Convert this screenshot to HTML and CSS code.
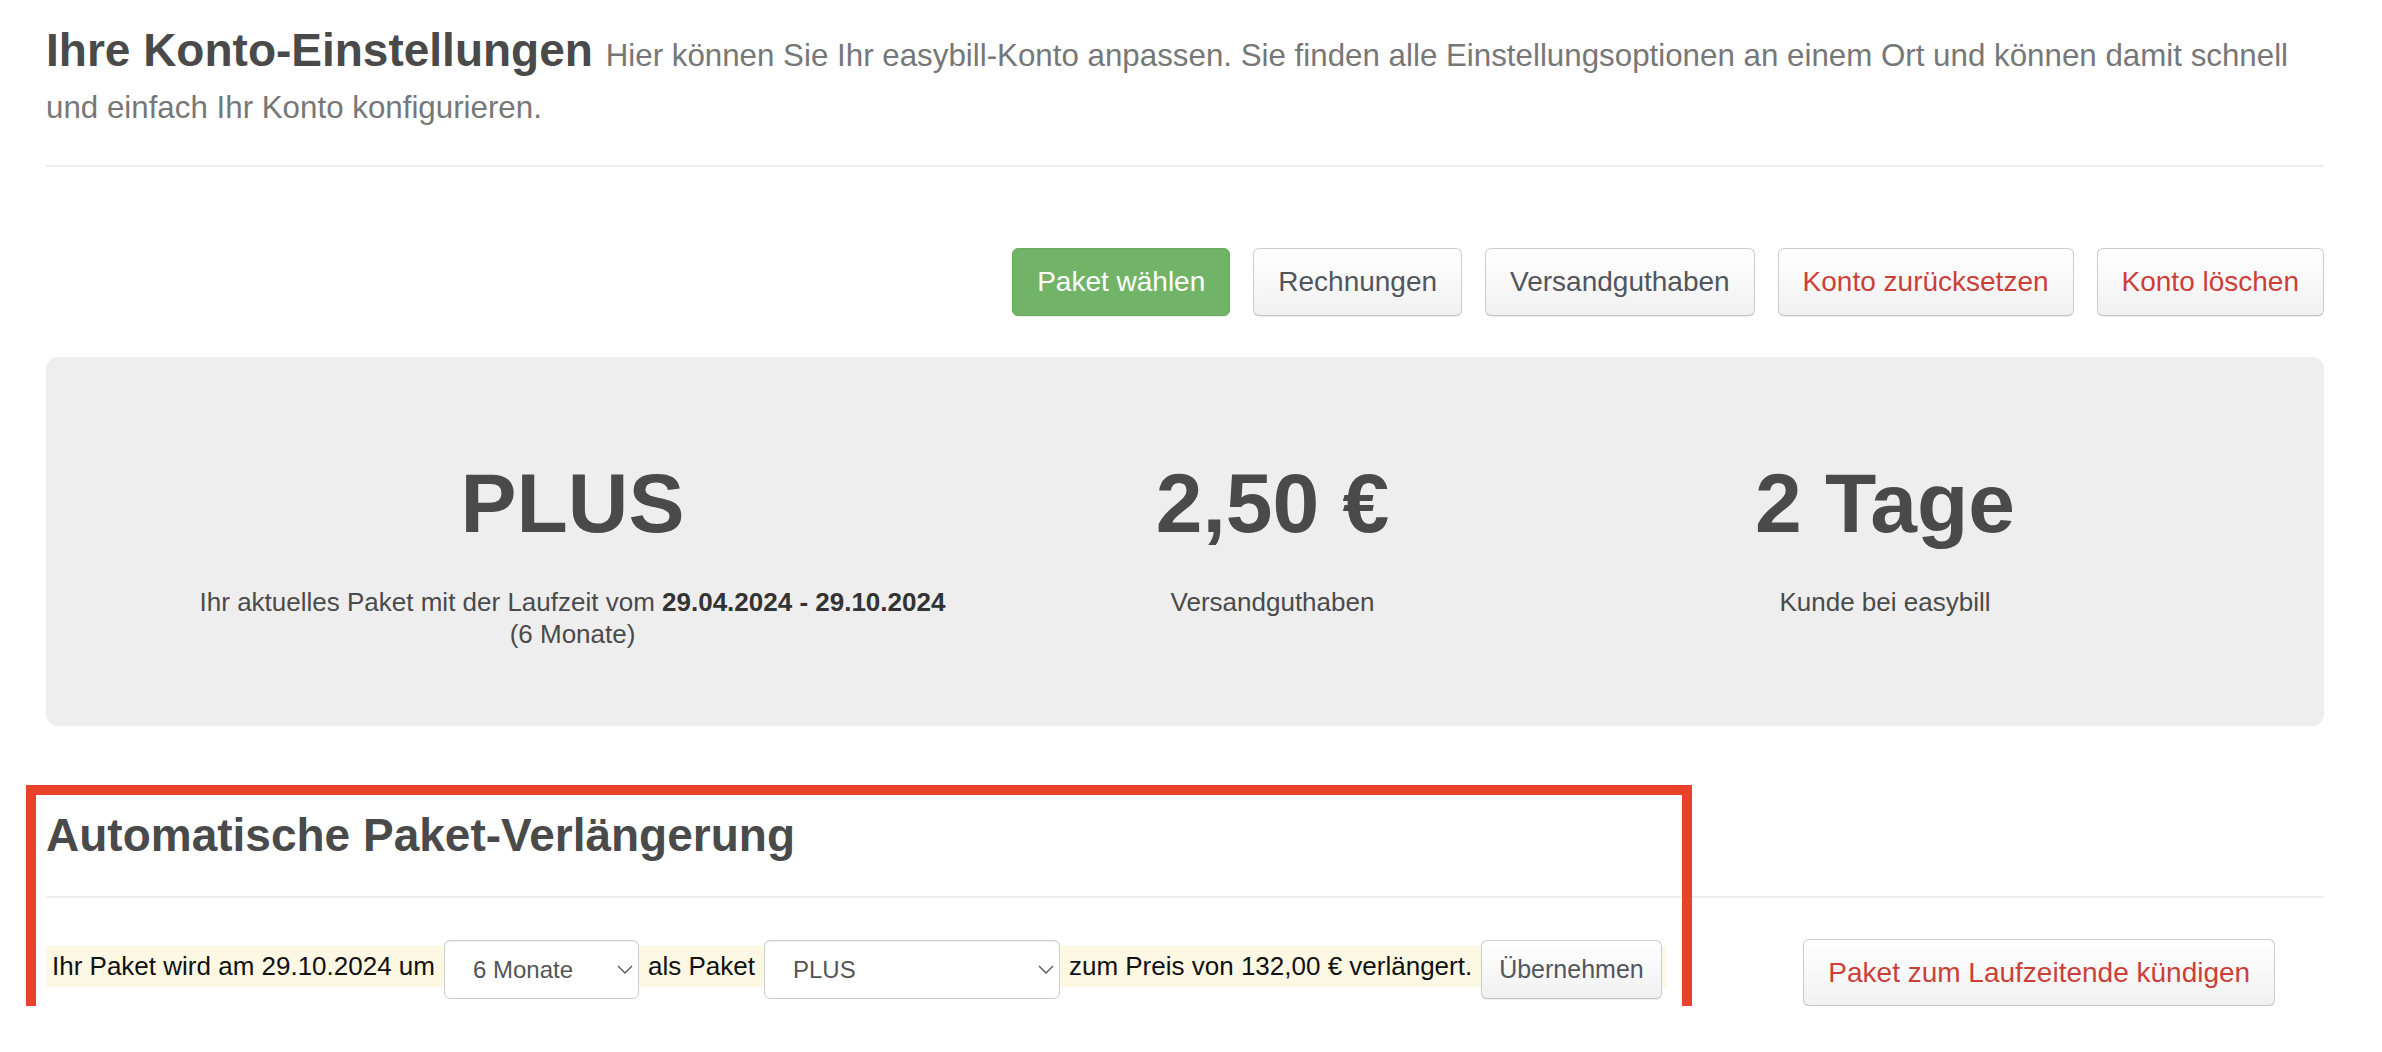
FILE: index.html
```html
<!DOCTYPE html>
<html lang="de">
<head>
<meta charset="utf-8">
<title>Konto-Einstellungen</title>
<link rel="stylesheet" href="styles.css">
</head>
<body>
<div class="page">
  <header class="page-header">
    <h1>Ihre Konto-Einstellungen <small>Hier können Sie Ihr easybill-Konto anpassen. Sie finden alle Einstellungsoptionen an einem Ort und können damit schnell und einfach Ihr Konto konfigurieren.</small></h1>
  </header>

  <div class="actions">
    <button class="btn btn-success">Paket wählen</button>
    <button class="btn">Rechnungen</button>
    <button class="btn">Versandguthaben</button>
    <button class="btn btn-danger-text">Konto zurücksetzen</button>
    <button class="btn btn-danger-text">Konto löschen</button>
  </div>

  <div class="well">
    <div class="stat">
      <div class="stat-value">PLUS</div>
      <div class="stat-label">Ihr aktuelles Paket mit der Laufzeit vom <b>29.04.2024 - 29.10.2024</b><br>(6 Monate)</div>
    </div>
    <div class="stat">
      <div class="stat-value">2,50 €</div>
      <div class="stat-label">Versandguthaben</div>
    </div>
    <div class="stat">
      <div class="stat-value">2 Tage</div>
      <div class="stat-label">Kunde bei easybill</div>
    </div>
  </div>

  <section class="renewal">
    <h2>Automatische Paket-Verlängerung</h2>
    <div class="renewal-row">
      <div class="renewal-main">
        <div class="band">
          <span class="band-text">Ihr Paket wird am 29.10.2024 um</span>
          <span class="select-wrap select-months">
            <select class="select"><option>6 Monate</option><option>12 Monate</option></select>
            <svg class="chev" width="16" height="9" viewBox="0 0 16 9"><polyline points="1,1 8,8 15,1" fill="none" stroke="#555" stroke-width="1.3"/></svg>
          </span>
          <span class="band-text">als Paket</span>
          <span class="select-wrap select-plan">
            <select class="select"><option>PLUS</option><option>BASIC</option></select>
            <svg class="chev" width="16" height="9" viewBox="0 0 16 9"><polyline points="1,1 8,8 15,1" fill="none" stroke="#555" stroke-width="1.3"/></svg>
          </span>
          <span class="band-text">zum Preis von 132,00 € verlängert.</span>
          <button class="btn btn-apply">Übernehmen</button>
        </div>
      </div>
      <div class="renewal-side">
        <button class="btn btn-danger-text btn-cancel">Paket zum Laufzeitende kündigen</button>
      </div>
    </div>
  </section>

  <div class="annotation"></div>
</div>
</body>
</html>
```

FILE: styles.css
```css
* {
  box-sizing: border-box;
}

body {
  margin: 0;
  background: #fff;
  font-family: "Liberation Sans", Arial, sans-serif;
  color: #4a4a4a;
}

.page {
  position: relative;
  padding: 24px 58px 0 46px;
}

/* Header */
.page-header {
  padding-bottom: 37px;
  border-bottom: 2px solid #eee;
}

.page-header h1 {
  margin: 0;
  font-size: 46px;
  line-height: 52px;
  font-weight: bold;
  color: #4a4a4a;
}

.page-header small {
  font-size: 31.3px;
  line-height: 34px;
  font-weight: normal;
  color: #777;
}

/* Buttons */
.actions {
  display: flex;
  justify-content: flex-end;
  gap: 23px;
  margin-top: 81px;
}

.btn {
  font-family: inherit;
  font-size: 28px;
  height: 68px;
  padding: 0 24px;
  border: 1px solid #ccc;
  border-bottom-color: #c2c2c2;
  border-radius: 6px;
  background: linear-gradient(#ffffff, #f1f1f1);
  color: #51565d;
  box-shadow: 0 1px 1px rgba(0, 0, 0, 0.07);
  white-space: nowrap;
  cursor: pointer;
}

.btn-success {
  background: #72b467;
  border-color: #69ac5e;
  color: #fff;
}

.btn-danger-text {
  color: #cb3f39;
}

/* Stats well */
.well {
  margin-top: 41px;
  background: #eee;
  border-radius: 12px;
  padding: 104px 89px 76px;
  display: grid;
  grid-template-columns: 5fr 3fr 4fr;
  text-align: center;
}

.stat-value {
  font-size: 84px;
  line-height: 84px;
  font-weight: bold;
  color: #4a4a4a;
}

.stat-label {
  margin-top: 41px;
  font-size: 26px;
  line-height: 32px;
  color: #4a4a4a;
}

.stat-label b {
  color: #333;
}

/* Renewal section */
.renewal h2 {
  margin: 83px 0 0;
  padding-bottom: 35px;
  border-bottom: 2px solid #eee;
  font-size: 46px;
  line-height: 52px;
  font-weight: bold;
  color: #4a4a4a;
}

.renewal-row {
  display: flex;
  align-items: flex-start;
  margin-top: 41px;
}

.renewal-main {
  flex: 0 0 75%;
}

.renewal-side {
  flex: 1;
  display: flex;
  justify-content: center;
}

.band {
  display: inline-flex;
  align-items: center;
  gap: 3px;
  height: 41px;
  margin-top: 7px;
  padding-right: 4px;
  background: #fcf8e3;
  color: #111;
  font-size: 26px;
}

.band-text {
  padding: 0 6px;
  white-space: nowrap;
}

.select-wrap {
  position: relative;
  display: block;
  flex: none;
  margin-top: 5px;
}

.select-months {
  width: 195px;
}

.select-plan {
  width: 296px;
}

.select {
  display: block;
  width: 100%;
  height: 59px;
  padding: 0 40px 0 28px;
  -webkit-appearance: none;
  appearance: none;
  border: 1px solid #ccc;
  border-radius: 6px;
  background: #fff;
  box-shadow: inset 0 1px 1px rgba(0, 0, 0, 0.06);
  font-family: inherit;
  font-size: 24px;
  color: #555;
}

.chev {
  position: absolute;
  right: 6px;
  top: 25px;
  pointer-events: none;
}

.btn-apply {
  flex: none;
  height: 59px;
  margin-top: 5px;
  padding: 0 17px;
  font-size: 25px;
}

.btn-cancel {
  height: 67px;
}

/* Screenshot annotation overlay */
.annotation {
  position: absolute;
  left: 26px;
  top: 785px;
  width: 1666px;
  height: 243px;
  border: 10px solid #e8422b;
  pointer-events: none;
}
```
